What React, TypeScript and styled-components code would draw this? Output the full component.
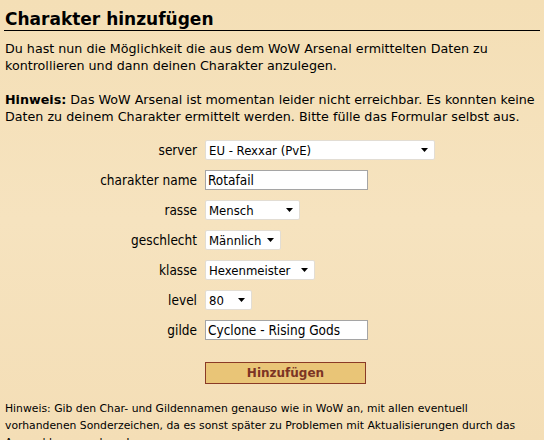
import styled, { createGlobalStyle } from 'styled-components';

const GlobalStyle = createGlobalStyle`
  html, body {
    margin: 0;
    padding: 0;
    background: #f4e0b8;
  }
  body {
    font-family: 'DejaVu Sans', Verdana, sans-serif;
    color: #000;
  }
`;

const fields = [
  { label: 'server', kind: 'select', value: 'EU - Rexxar (PvE)', width: 230 },
  { label: 'charakter name', kind: 'input', value: 'Rotafail', width: 163 },
  { label: 'rasse', kind: 'select', value: 'Mensch', width: 95 },
  { label: 'geschlecht', kind: 'select', value: 'Männlich', width: 76 },
  { label: 'klasse', kind: 'select', value: 'Hexenmeister', width: 110 },
  { label: 'level', kind: 'select', value: '80', width: 47 },
  { label: 'gilde', kind: 'input', value: 'Cyclone - Rising Gods', width: 163 },
];

const App = () => {
  return (
    <Page>
      <GlobalStyle />
      <Title>Charakter hinzufügen</Title>
      <Text>
        Du hast nun die Möglichkeit die aus dem WoW Arsenal ermittelten Daten zu
        <br />
        kontrollieren und dann deinen Charakter anzulegen.
      </Text>
      <Text>
        <b>Hinweis:</b> Das WoW Arsenal ist momentan leider nicht erreichbar. Es
        konnten keine Daten zu deinem Charakter ermittelt werden. Bitte fülle das
        Formular selbst aus.
      </Text>
      <Form onSubmit={(e) => e.preventDefault()}>
        {fields.map((f) => (
          <Row key={f.label}>
            <Label>{f.label}</Label>
            {f.kind === 'select' ? (
              <SelectBox $width={f.width}>
                <span>{f.value}</span>
                <Arrow width='7' height='4' viewBox='0 0 7 4'>
                  <path d='M0 0H7L3.5 4Z' fill='#000' />
                </Arrow>
              </SelectBox>
            ) : (
              <TextInput $width={f.width} defaultValue={f.value} />
            )}
          </Row>
        ))}
        <Row>
          <span />
          <SubmitButton type='submit'>Hinzufügen</SubmitButton>
        </Row>
      </Form>
      <Footnote>
        Hinweis: Gib den Char- und Gildennamen genauso wie in WoW an, mit allen
        eventuell vorhandenen Sonderzeichen, da es sonst später zu Problemen mit
        Aktualisierungen durch das Arsenal kommen kann!
      </Footnote>
    </Page>
  );
};

const Page = styled.div`
  padding: 10px 4px 0 5px;
  height: 440px;
  box-sizing: border-box;
  overflow: hidden;
  background: linear-gradient(180deg, #f4dfb6 0%, #f6e3bf 50%, #f4deb6 100%);
`;

const Title = styled.h1`
  margin: 0 0 9px -1px;
  padding: 0 0 1px 1px;
  font-size: 17px;
  line-height: 19px;
  font-weight: bold;
  border-bottom: 1px solid #000;
`;

const Text = styled.p`
  margin: 0 0 17px;
  font-size: 12.7px;
  line-height: 17px;
  width: 535px;
`;

const Form = styled.form`
  display: grid;
  grid-template-columns: 200px auto;
  row-gap: 10px;
  margin-top: -2px;
`;

const Row = styled.div`
  display: contents;
`;

const Label = styled.label`
  font-family: 'DejaVu Sans Condensed', Tahoma, sans-serif;
  font-size: 13.5px;
  text-align: right;
  line-height: 20px;
  padding-right: 8px;
`;

const SelectBox = styled.div<{ $width: number }>`
  width: ${(p) => p.$width}px;
  height: 20px;
  box-sizing: border-box;
  background: #fff;
  border: 1px solid #e2ddd4;
  border-radius: 2px;
  display: flex;
  align-items: center;
  justify-content: space-between;
  padding: 0 6px 0 3px;
  font-family: 'DejaVu Sans Condensed', Tahoma, sans-serif;
  font-size: 13px;
`;

const Arrow = styled.svg`
  flex: none;
`;

const TextInput = styled.input<{ $width: number }>`
  width: ${(p) => p.$width}px;
  height: 20px;
  box-sizing: border-box;
  border: 1px solid #a5a5a5;
  background: #fff;
  padding: 0 2px;
  font-family: 'DejaVu Sans Condensed', Tahoma, sans-serif;
  font-size: 13.5px;
  color: #000;
  outline: none;
`;

const SubmitButton = styled.button`
  margin-top: 12px;
  width: 161px;
  height: 22px;
  border: 1px solid #8a3a26;
  background: #e9c577;
  color: #7c3424;
  font-family: 'DejaVu Sans', Verdana, sans-serif;
  font-weight: bold;
  font-size: 12px;
  cursor: pointer;
  padding: 0;
`;

const Footnote = styled.p`
  margin: 16px 0 0;
  font-size: 10.8px;
  line-height: 17px;
  width: 535px;
`;

export default App;
